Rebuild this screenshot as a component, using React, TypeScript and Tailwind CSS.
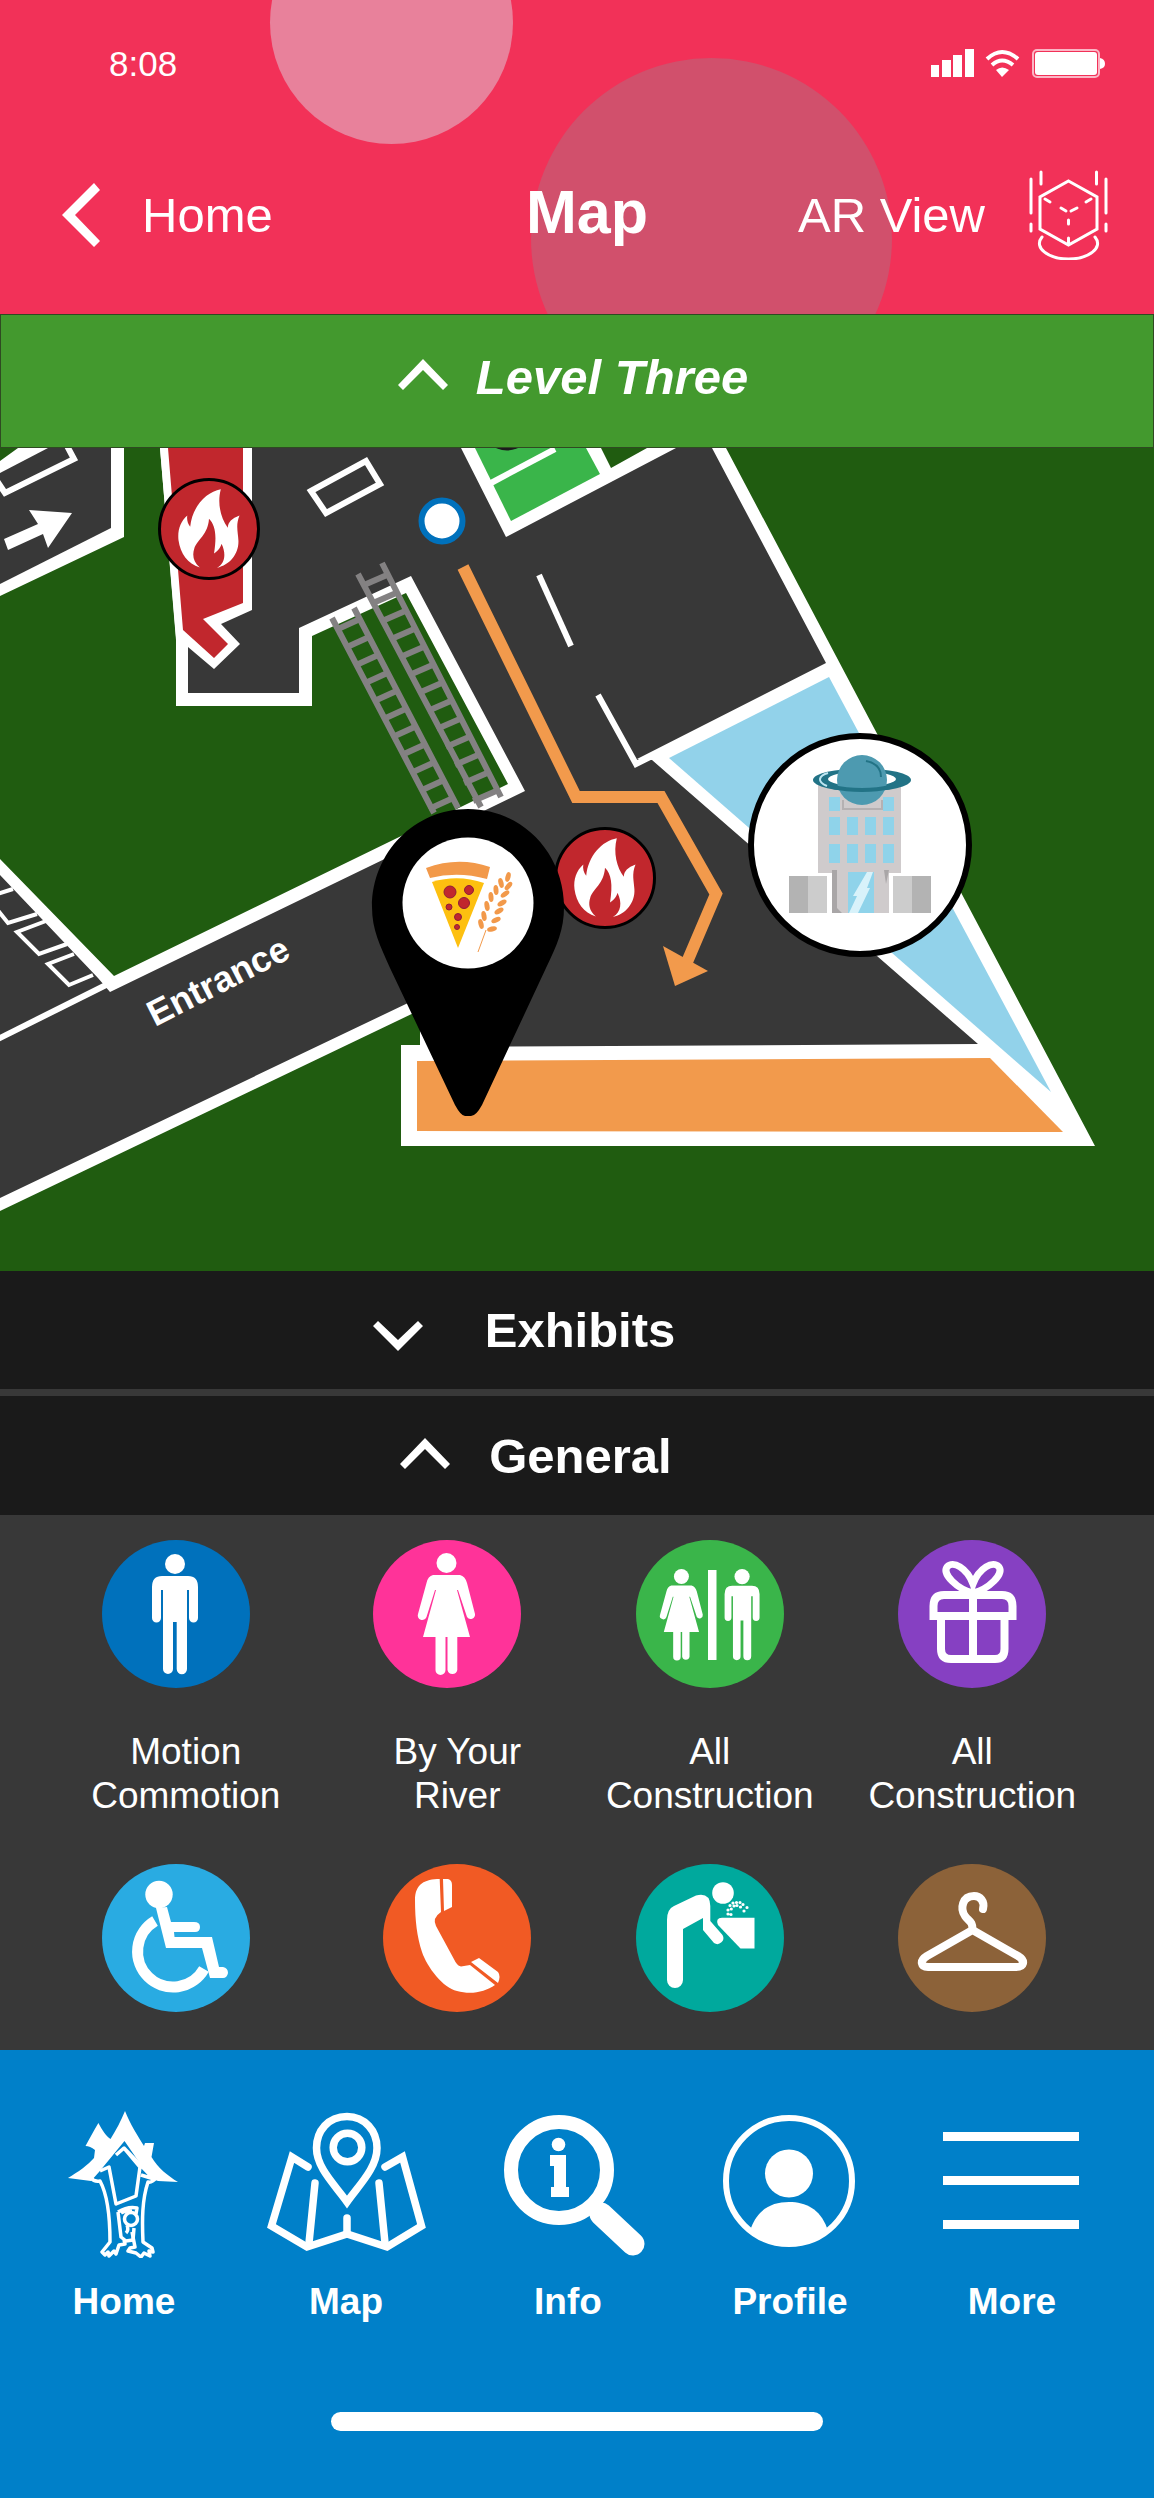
import React from "react";

const FLAME =
  "M11.8 -39.8C-2.9 -37.2 -16.9 -22.2 -18.8 -2.2C-21.3 -5.5 -22.4 -9.5 -21.7 -13.5C-28.7 -7.2 -31.6 1.2 -30.5 11.2C-28.7 24.5 -21.3 34.5 -9.2 38.5C-15.8 32.8 -16.9 26.2 -14.7 19.5C-12 11 -1 6 0 -10.2C6.3 -3.8 8 6.2 5 24.5C10 21 11.8 17.8 12.5 14.8C17.3 24.5 16.2 34.5 8 38.8C21 36 30.2 24.5 29.4 11.2C29 3 26.5 -3.8 30.5 -13.5C22.8 -10.5 19 -7 18.8 -1.2C11.8 -10.5 8 -25.5 11.8 -39.8Z";

function FireBadge({ x, y }: { x: number; y: number }) {
  return (
    <g transform={`translate(${x} ${y})`}>
      <circle r="49.5" fill="#c1272d" stroke="#000" strokeWidth="3" />
      <path d={FLAME} fill="#fff" />
    </g>
  );
}

function Ladder({ rails, x, y, dx, count }: { rails: string; x: number; y: number; dx: number; count: number }) {
  return (
    <g fill="none" stroke="#838182" strokeWidth="6">
      <path d={rails} />
      {Array.from({ length: count }, (_, i) => (
        <line key={i} x1={x + i * 9.1} y1={y + i * 18} x2={x + dx + i * 9.1} y2={y - 10 + i * 18} />
      ))}
    </g>
  );
}

// [x, y, rotation] of each grain
const grains = [
  [508, 877, 15], [501, 883, -15], [508.5, 886, 40], [496, 890, -5], [505, 894, 55],
  [491, 897, -5], [502, 903, 60], [487, 906, -10], [499, 911, 60], [484, 916, -10],
  [496, 920, 65], [481, 924, -15], [492, 929, 75],
];

const windowCols = [829, 847, 865, 883];

function FloorMap() {
  return (
    <svg viewBox="0 448 1154 823" className="block w-full h-auto bg-[#205c10]" role="img" aria-label="Level three floor map">
      {/* walls */}
      <path fill="#fff" d="M0 448H726L1095 1146H401V1045H420V1010L0 1211Z" />
      {/* grass */}
      <path fill="#205c10" d="M0 596L124 537V448H160L176 637V706H312V636L406 593L508 784L114 976L0 859Z" />
      <path fill="#205c10" d="M601 448H647L611 468ZM0 448H18L0 461Z" />
      {/* floors */}
      <path fill="#383838" d="M0 473L48 448H111V528L0 584Z" />
      <path
        fill="#383838"
        d="M252 448H461L506 537L676 448H712L826 663L637 759L652 760L978 1044L432 1047L408 1003L0 1198V875L98 978L110 992L525 791L411 576L299 628V693H188V640L252 600Z"
      />
      {/* rooms */}
      <path fill="#92d2ea" d="M669 758L829 677L1051 1092Z" />
      <path fill="#f29a4c" d="M417 1061L990 1058L1063 1132L417 1131Z" />
      <path fill="#3ab54a" d="M475 448H586L600 474L511 521Z" />
      <circle cx="507" cy="425" r="25.5" fill="#1c1c1c" />
      <path fill="#fff" d="M160 448H252V610L221 624L240 644L214 669L188 647L176 640Z" />
      <path fill="#c1272d" d="M168 448H243V603L203 619L228 644L214 658L183 630Z" />

      <g fill="none" stroke="#fff" strokeWidth="6">
        <path d="M491 483L555 449" />
        <path d="M-3 481L5 493L74 459L66 444" />
        <path d="M311 491L366 461L380 484L326 513Z" />
        <path d="M539 575L571 646" />
        <path d="M598 695L636 764L656 754" />
        <path d="M-2 1039L108 984" />
      </g>
      <path fill="none" stroke="#fff" strokeWidth="4" d="M-3 894L13 889M-4 908L8 923L37 914M46 921L17 932L39 954L67 944M74 954L48 964L69 985L93 975" />
      <path fill="#fff" d="M4 539L38 524L29 510L72 513L48 548L43 534L8 550Z" />

      <Ladder rails="M358 574L481 807M382 563L501 797" x={364} y={585} dx={23} count={13} />
      <Ladder rails="M332 618L434 813M354 608L458 808" x={338} y={629} dx={22} count={11} />

      {/* route */}
      <path fill="none" stroke="#f29a4c" strokeWidth="12" d="M463 567L576 797H661L716 894L687 962" />
      <path fill="#f29a4c" d="M663 946L708 971L675 986Z" />
      <circle cx="442" cy="521" r="20.5" fill="#fff" stroke="#0071bc" strokeWidth="6" />

      <text
        transform="translate(155 1027) rotate(-27)"
        className="fill-white font-bold text-[36px] font-['Liberation_Sans',Arial,sans-serif]"
      >
        Entrance
      </text>

      <FireBadge x={209} y={529} />
      <FireBadge x={605} y={878} />

      {/* food pin */}
      <path d="M468 809C415 809 372 852 372 907C372 930 380 945 390 968L455 1105Q461 1116 465 1116H471Q476 1116 482 1105L546 968C557 945 564 930 564 907C564 852 521 809 468 809Z" />
      <circle cx="468" cy="903" r="65.5" fill="#fff" />
      <path fill="#f2994a" d="M426 868Q458 856 490 867L487 879Q458 871 430 878Z" />
      <path fill="#fdc010" d="M432 882Q458 874 484 883L458 948Z" />
      <g fill="#c1272d" stroke="#8f1d3a" strokeWidth="1">
        <circle cx="450" cy="892" r="6" />
        <circle cx="469" cy="890" r="4.5" />
        <circle cx="464" cy="903" r="5.5" />
        <circle cx="449" cy="907" r="3" />
        <circle cx="458" cy="917" r="3.5" />
        <circle cx="457" cy="927" r="2.5" />
      </g>
      <path d="M478 952L486 930" stroke="#f2994a" strokeWidth="1" />
      {grains.map(([x, y, r]) => (
        <ellipse key={y} cx={x} cy={y} rx="2.5" ry="5" fill="#f2994a" transform={`rotate(${r} ${x} ${y})`} />
      ))}

      {/* science building */}
      <circle cx="860" cy="845" r="109" fill="#fff" stroke="#000" strokeWidth="6" />
      <path fill="#cfcbcc" d="M818 785H901V873H889V913H832V873H818Z" />
      <path fill="none" stroke="#b5b1b2" strokeWidth="2" d="M843 800V809H882V800" />
      <path fill="#a9a6a7" d="M832 870H837V908L842 913H832ZM884 870H889L886 884Z" />
      <g fill="#8fd3ea">
        {windowCols.map((x) => (
          <React.Fragment key={x}>
            <rect x={x} y="817" width="11" height="18" />
            <rect x={x} y="844" width="11" height="19" />
          </React.Fragment>
        ))}
        <rect x="829" y="797" width="11" height="14" />
        <rect x="883" y="797" width="11" height="14" />
        <rect x="848" y="872" width="26" height="41" />
      </g>
      <path fill="#d8f2fa" d="M867 872H873L867 888H870L858 913H849L857 896H853Z" />
      <rect x="789" y="876" width="38" height="37" fill="#ccc" />
      <rect x="789" y="876" width="19" height="37" fill="#b3b3b3" />
      <rect x="893" y="876" width="38" height="37" fill="#ccc" />
      <rect x="912" y="876" width="19" height="37" fill="#b3b3b3" />
      {/* planet with its ring: back half, globe, front half */}
      <path
        fill="#227386"
        fillRule="evenodd"
        d="M813 780A49 11.500 0 1 1 911 780A49 11.500 0 1 1 813 780ZM828 779A34 7.500 0 1 0 896 779A34 7.500 0 1 0 828 779Z"
      />
      <path fill="none" stroke="#bfe6f2" strokeWidth="2" d="M828 773C818 776 817 782 827 786" />
      <circle cx="862" cy="780" r="25" fill="#4d9ab0" />
      <path fill="none" stroke="#227386" strokeWidth="2" d="M866 761C876 763 881 769 881 777" />
      <path fill="none" stroke="#227386" strokeWidth="4" d="M833 787C850 791 874 791 890 787" />
    </svg>
  );
}

function Chevron({ up = false }: { up?: boolean }) {
  return (
    <svg viewBox="0 0 50 42" className="w-[50px] h-[42px] shrink-0" fill="#fff" aria-hidden="true">
      <path d={up ? "M25 3L50 29L45 34L25 14L5 34L0 29Z" : "M25 42L50 17L45 12L25 31L5 12L0 17Z"} />
    </svg>
  );
}

function Man() {
  return (
    <g>
      <circle cx="73" cy="24" r="10" />
      <path d="M60 36H86Q96 36 96 47V78A4.5 4.5 0 0 1 87 78V50H85V129A5 5 0 0 1 74.7 129V82H71V129A5 5 0 0 1 61 129V50H59V78A4.5 4.5 0 0 1 50 78V47Q50 36 60 36Z" />
    </g>
  );
}

function Woman() {
  return (
    <g>
      <circle cx="73.5" cy="23" r="10" />
      <path d="M60 35H87Q92 36 94 43L102 74A4.4 4.4 0 0 1 94 77L85 50H84L97 97H84.3V130A5 5 0 0 1 74.5 130V97H72.5V130A5 5 0 0 1 62.5 130V97H50L63 50H62L53.5 77A4.4 4.4 0 0 1 45 74L53.5 43Q55 36 60 35Z" />
    </g>
  );
}

const amenities = [
  { name: "Men's restroom", label: "Motion Commotion", color: "#0071bc", shift: true, icon: <Man /> },
  { name: "Women's restroom", label: "By Your River", color: "#ff3399", shift: true, icon: <Woman /> },
  {
    name: "Restrooms",
    label: "All Construction",
    color: "#3ab54a",
    icon: (
      <g>
        <g transform="translate(-9.7 19.3) scale(.75)"><Woman /></g>
        <rect x="72" y="30" width="8.5" height="90" />
        <g transform="translate(50.6 18.3) scale(.76)"><Man /></g>
      </g>
    ),
  },
  {
    name: "Gift shop",
    label: "All Construction",
    color: "#8640c2",
    icon: (
      <g fill="none" stroke="#fff" strokeWidth="8">
        <path d="M35.5 76H114.5V66Q114.5 55 104 55H46Q35.5 55 35.5 66Z" />
        <path d="M43 80V109Q43 119 53 119H97Q106.5 119 106.5 109V80M75 52V119" />
        <path strokeWidth="7" d="M75 53C59 49 44 34 49 27C55 20 69 28 75 44C81 28 95 20 101 27C106 34 91 49 75 53Z" />
      </g>
    ),
  },
  {
    name: "Accessible",
    color: "#29abe2",
    icon: (
      <g>
        <circle cx="57" cy="30.5" r="13.7" />
        <path d="M54 44L65 43L69 58H92Q98 58 98 63Q98 68 93 68H72L72.5 73H110L117 103H121Q126 104 126 109Q125 114 121 114H108L100 84H64Z" />
        <path fill="none" stroke="#fff" strokeWidth="11" d="M53 57A35.5 35.5 0 1 0 102 105" />
      </g>
    ),
  },
  {
    name: "Telephone",
    color: "#f15a24",
    shift: true,
    icon: (
      <g>
        <path d="M56.7 15C42 15 32 20 32 36C32 56 34 73 39 88C44 103 60 124 74 127C88 131 102 128 112 121L87 101L78 102.5Q75 102 72.5 98L53 62Q49 54 58 48Z" />
        <path d="M60 15H65Q69 16 69 21V43L61 47ZM88 98L96 94L115 108Q118 112 115 119Z" />
      </g>
    ),
  },
  {
    name: "Drinking fountain",
    color: "#00a99d",
    icon: (
      <g>
        <circle cx="87" cy="29" r="10.8" />
        <path d="M31 56Q31 45 38 42L60 31.5Q74 28 74.3 42V57L86.5 71A6 6 0 0 1 78 79L67 66V54L47 65V116A8 8 0 0 1 31 116Z" />
        <path d="M86 53.7H118.5V84.5H104.5L82 61Q79 54 86 53.7Z" />
        <path
          fill="none"
          stroke="#fff"
          strokeWidth="3.2"
          strokeLinecap="round"
          d="M92 50h0M95 50.5h0M92 46h0M95.3 45h0M94 41.5h0M98 42h0M100.5 38.5h0M97 39h0M104 38.5h0M107 40.5h0M111 43.5h0M108 47h0M104.5 43h0M101 41.5h0"
        />
      </g>
    ),
  },
  {
    name: "Coat check",
    color: "#8c6239",
    icon: (
      <g fill="none" stroke="#fff" strokeWidth="8" strokeLinecap="round" strokeLinejoin="round">
        <path d="M85 45C87 37 82 32 76 32C64 32 62 45 67 52C70 57 75 57 74.5 66" />
        <path d="M74.5 66L29 92C21 97 23 103 30 103H118C126 103 128 97 120 92Z" />
      </g>
    ),
  },
];

const tabs = [
  {
    label: "Home",
    icon: (
      <g>
        <path d="M81 1C86 14 94 26 100 36L101 33H110L107.5 47C114 58 124 66 134 72L114 71L106 68L80.5 31L55 62L47 71L24 68C34 62 44 55 50 48L51 40Q46 36 41.5 36C46 28 50 20 54.4 13C58 20 62 26 66.5 29C72 20 77 11 81 1Z" />
        <g fill="none" stroke="#fff" strokeWidth="3.5" strokeLinejoin="round">
          <path d="M56 61L65 57L72 94L92 86L96 57L80 38L72 45M80 38L110 69L97 65" />
          <path d="M47 68Q50 72 56 71C62 82 66 98 66 132L58 142L61 145L64 142L65 146L70 141L72 144L75 135L81 134L80 130" />
          <path d="M112 68Q108 73 104 72C98 90 98 110 99 132L108 138L109 142L105 141L106 146L100 143L97 147L92 143L84 141L86 138L91 137L88 122" />
          <path d="M74 102Q84 96 93 98L92 104M74 102L77 127L82 131L89 130L90 118M77 103Q82 100 88 101" />
          <circle cx="87" cy="109" r="6.5" />
          <path d="M83 115Q85 120 82 123" />
        </g>
      </g>
    ),
  },
  {
    label: "Map",
    icon: (
      <g fill="none" stroke="#fff" strokeWidth="7.5" strokeLinecap="round">
        <path d="M81 6.5C62 6.5 50.5 21 50.5 38C50.5 58 69 75 81 92C93 75 111 58 111 38C111 21 99 6.5 81 6.5Z" />
        <circle cx="81.5" cy="37.5" r="14.3" />
        <path d="M42 57L26 47L5.5 116L41 137L81 124L121 137L155.5 116L136.5 47L119 57" />
        <path d="M49 73L43 133M113 73L119 133M81 108V123" />
      </g>
    ),
  },
  {
    label: "Info",
    icon: (
      <g>
        <circle cx="71" cy="60" r="48" fill="none" stroke="#fff" strokeWidth="14" />
        <path d="M113 104L145 134" stroke="#fff" strokeWidth="23" strokeLinecap="round" />
        <circle cx="70.5" cy="34.5" r="6.8" />
        <rect x="62" y="45" width="16" height="11" />
        <rect x="66" y="45" width="12" height="40" />
        <rect x="63" y="77" width="18" height="10" />
      </g>
    ),
  },
  {
    label: "Profile",
    icon: (
      <g>
        <circle cx="79" cy="71" r="63" fill="none" stroke="#fff" strokeWidth="6" />
        <circle cx="79" cy="63.5" r="24" />
        <path d="M41 118C48 99 62 92 79 92C96 92 110 99 117 118C106 130 94 135 79 135C64 135 52 130 41 118Z" />
      </g>
    ),
  },
  {
    label: "More",
    icon: <path d="M11 22H147V31H11ZM11 66H147V75H11ZM11 110H147V119H11Z" />,
  },
];

function Header() {
  return (
    <header className="relative overflow-hidden bg-[#f23158] text-white">
      <div className="absolute -top-[99px] left-[270px] size-[243px] rounded-full bg-[#e8819b]" />
      <div className="absolute top-[58px] left-[531px] size-[361px] rounded-full bg-[#d1506c]" />

      <div className="relative flex items-center justify-between pt-[42px] pl-[109px] pr-[49px]">
        <span className="text-[35px] leading-[44px]">8:08</span>
        <svg viewBox="931 47 174 32" className="w-[174px] h-8" fill="#fff" aria-label="Signal, wifi and battery">
          <path d="M931 64H939V76H931ZM942 59H951V76H942ZM953 54H962V76H953ZM965 48H974V76H965Z" />
          <path fill="none" stroke="#fff" strokeWidth="4" d="M987 58Q1002 44 1018 58M992 64Q1002 55 1013 64" />
          <path d="M1002 76L996 69Q1002 64 1009 69Z" />
          <rect x="1033" y="49" width="66" height="27" rx="4" fill="none" stroke="#fbb6c5" strokeWidth="2" />
          <rect x="1035" y="51" width="62" height="23" rx="3" />
          <path d="M1100 57Q1105 58 1105 63Q1105 67 1100 68Z" />
        </svg>
      </div>

      <div className="relative grid grid-cols-[1fr_auto_1fr] items-center pt-[84px] pb-[54px] pl-[62px] pr-[46px]">
        <a href="#home" className="flex items-center gap-[41px] text-[49px] leading-[60px]">
          <svg viewBox="0 0 39 64" className="w-[39px] h-16" fill="#fff" aria-hidden="true">
            <path d="M32 0L38 7L13 32L38 58L32 64L0 32Z" />
          </svg>
          Home
        </a>
        <h1 className="pb-1.5 pl-1 text-[61px] leading-[60px] font-bold">Map</h1>
        <a href="#ar" className="flex items-center justify-end gap-11 text-[49px] leading-[60px] whitespace-nowrap">
          AR View
          <svg viewBox="0 0 79 90" className="w-[79px] h-[90px] shrink-0" fill="none" stroke="#fff" strokeWidth="3" strokeLinecap="round" aria-hidden="true">
            <path d="M39.5 11L68 27V59L39.5 75L11 59V27Z" />
            <path d="M2 9V43M2 54V61M12 2V14M67.5 2V14M77 9V43M77 54V61" />
            <path d="M16 29L21 32M62 29L57 32M32 38L37 41M48 38L42 41M39.5 50V54M39.5 68V73" />
            <path d="M13 67C4 78 20 89 39.5 89C59 89 75 78 66 67" />
          </svg>
        </a>
      </div>
    </header>
  );
}

export default function App() {
  return (
    <div className="w-full bg-[#383838] font-['Liberation_Sans',Arial,sans-serif] text-white">
      <Header />

      <button type="button" className="flex h-[134px] w-full items-center justify-center gap-[28px] border border-[#2f4a22] bg-[#43992e] pb-2 pr-2 text-[49px] leading-[60px] font-bold italic">
        <Chevron up />
        Level Three
      </button>

      <FloorMap />

      <div className="flex flex-col gap-[7px]">
        <button type="button" className="flex h-[118px] w-full items-center justify-center gap-[62px] bg-[#1a1a1a] pr-[106px] text-[49px] leading-[60px] font-bold">
          <Chevron />
          Exhibits
        </button>
        <button type="button" aria-expanded="true" className="flex h-[119px] w-full items-center justify-center gap-[39px] bg-[#1a1a1a] pr-[82px] text-[49px] leading-[60px] font-bold">
          <Chevron up />
          General
        </button>
      </div>

      <section className="grid grid-cols-[15fr_15fr_14fr_15fr] gap-y-[46px] pt-[25px] pb-[38px] pl-[40px] pr-[46px]">
        {amenities.map((item) => (
          <button key={item.name} type="button" aria-label={item.name} className="flex flex-col items-center gap-[42px]">
            <svg viewBox="0 0 148 148" className={item.shift && !item.label ? "w-[168px] h-[148px] pl-5" : "size-[148px]"} fill="#fff" aria-hidden="true">
              <circle cx="74" cy="74" r="74" fill={item.color} />
              {item.icon}
            </svg>
            {item.label && (
              <span className={`text-[37px] leading-[44px] ${item.shift ? "w-[230px] pl-5" : "w-[210px]"}`}>
                {item.label}
              </span>
            )}
          </button>
        ))}
      </section>

      <nav className="bg-[#0080c9] pt-[60px] pb-[67px]">
        <div className="grid grid-cols-5 pl-[13px] pr-[31px]">
          {tabs.map((tab) => (
            <a key={tab.label} href={`#${tab.label.toLowerCase()}`} className="flex flex-col items-center gap-[22px]">
              <svg viewBox="0 0 160 148" className="w-40 h-[148px]" fill="#fff" aria-hidden="true">
                {tab.icon}
              </svg>
              <span className="text-[37px] leading-[44px] font-bold">{tab.label}</span>
            </a>
          ))}
        </div>
        <div className="mx-auto mt-[88px] h-[19px] w-[492px] rounded-full bg-white" />
      </nav>
    </div>
  );
}
